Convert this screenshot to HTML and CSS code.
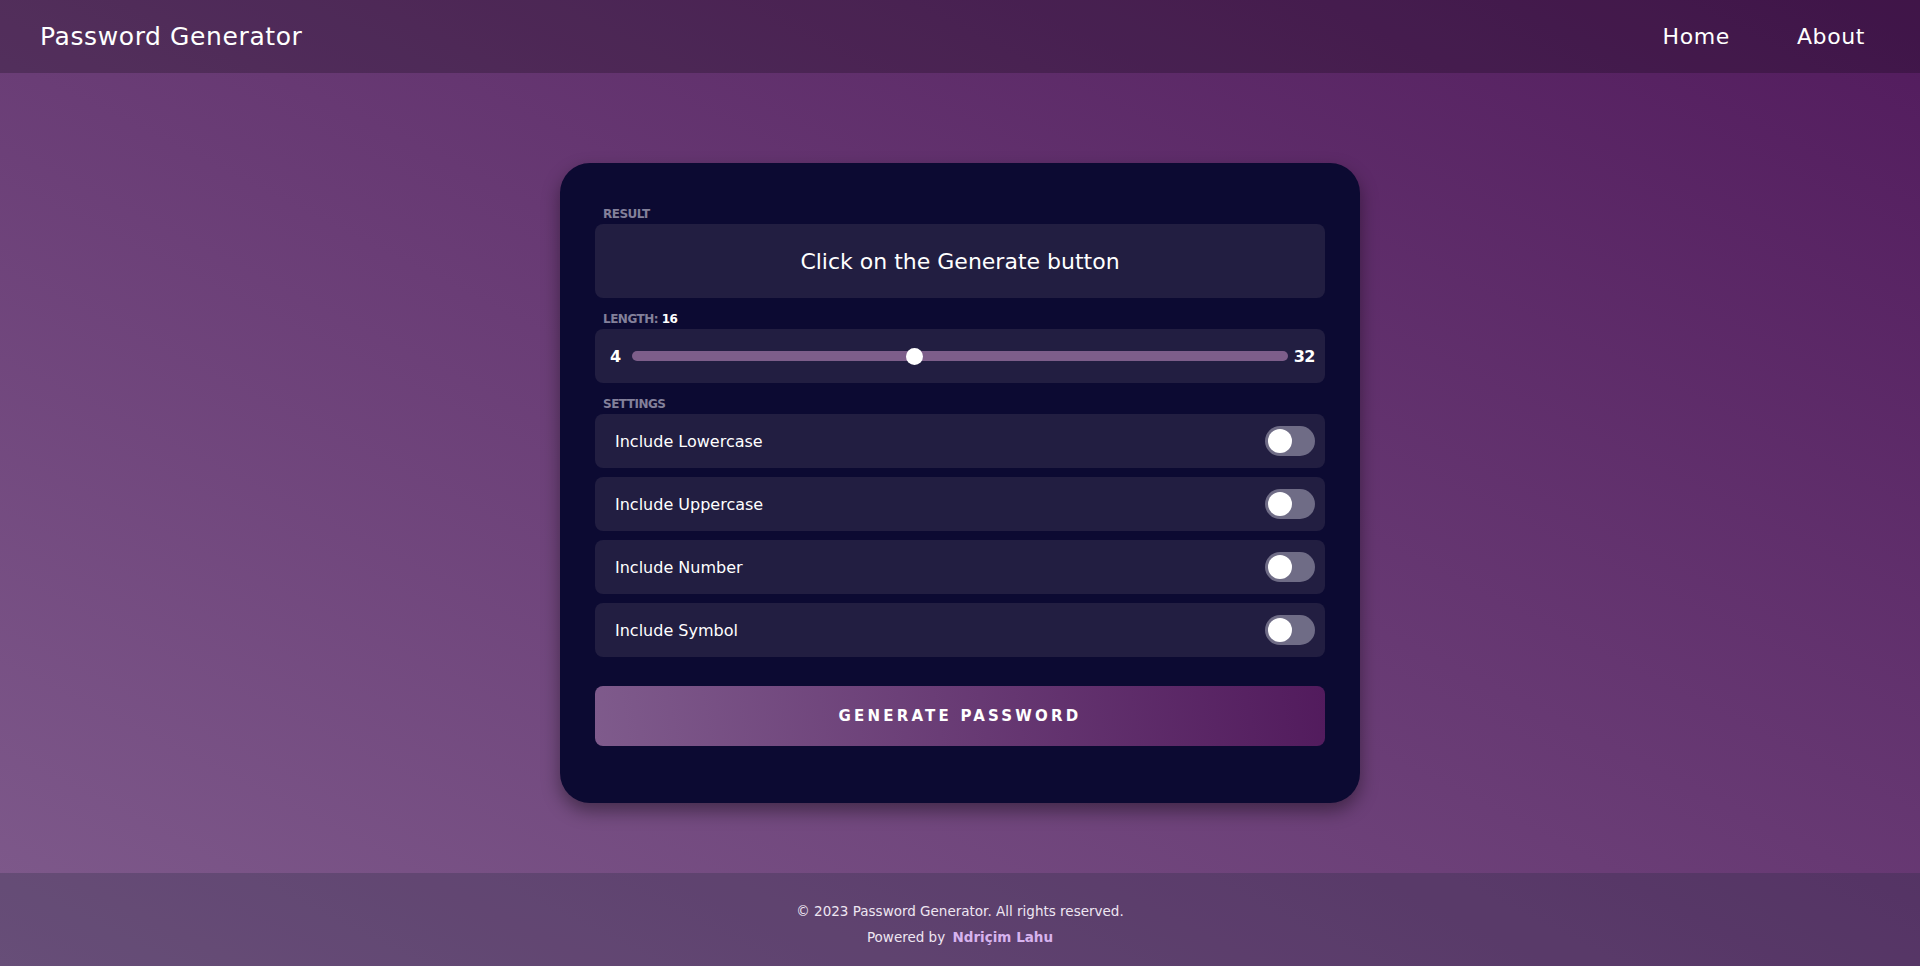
FILE: index.html
```html
<!DOCTYPE html>
<html lang="en">
<head>
<meta charset="utf-8">
<title>Password Generator</title>
<link rel="stylesheet" href="styles.css">
</head>
<body>
  <header class="topbar">
    <div class="brand">Password Generator</div>
    <nav class="nav">
      <a class="nav-link" href="#">Home</a>
      <a class="nav-link" href="#">About</a>
    </nav>
  </header>
  <main class="main">
    <section class="card">
      <div class="label label-first">RESULT</div>
      <div class="result">Click on the Generate button</div>

      <div class="label">LENGTH: <span class="label-value">16</span></div>
      <div class="slider-box">
        <span class="num num-min">4</span>
        <input class="range" type="range" min="4" max="32" value="16">
        <span class="num num-max">32</span>
      </div>

      <div class="label">SETTINGS</div>
      <div class="settings">
        <div class="setting">
          <span class="setting-text">Include Lowercase</span>
          <span class="toggle"><span class="knob"></span></span>
        </div>
        <div class="setting">
          <span class="setting-text">Include Uppercase</span>
          <span class="toggle"><span class="knob"></span></span>
        </div>
        <div class="setting">
          <span class="setting-text">Include Number</span>
          <span class="toggle"><span class="knob"></span></span>
        </div>
        <div class="setting">
          <span class="setting-text">Include Symbol</span>
          <span class="toggle"><span class="knob"></span></span>
        </div>
      </div>

      <button class="generate">GENERATE PASSWORD</button>
    </section>
  </main>
  <footer class="footer">
    <p class="footer-line">© 2023 Password Generator. All rights reserved.</p>
    <p class="footer-line">Powered by <a class="author" href="#">Ndriçim Lahu</a></p>
  </footer>
</body>
</html>
```
FILE: styles.css
```css
* { box-sizing: border-box; }

html, body {
  margin: 0;
  height: 100%;
}

body {
  font-family: "DejaVu Sans", "Liberation Sans", sans-serif;
  color: #fff;
  background: linear-gradient(to top right, #7f5b8c, #521b5d);
  display: flex;
  flex-direction: column;
  min-height: 966px;
}

.topbar {
  height: 73px;
  flex: 0 0 73px;
  display: flex;
  align-items: center;
  justify-content: space-between;
  padding: 0 55px 0 40px;
  background: rgba(0, 0, 0, 0.22);
}

.brand {
  font-size: 25px;
  letter-spacing: 0.6px;
}

.nav {
  display: flex;
  gap: 67px;
}

.nav-link {
  color: #fff;
  text-decoration: none;
  font-size: 22px;
  letter-spacing: 0.6px;
}

.main {
  flex: 1;
  display: flex;
  justify-content: center;
  align-items: flex-start;
  padding-top: 90px;
}

.card {
  width: 800px;
  height: 640px;
  background: #0c0a32;
  border-radius: 30px;
  padding: 43px 35px 57px;
  box-shadow: 0 8px 18px rgba(0, 0, 0, 0.4);
  display: flex;
  flex-direction: column;
}

.label {
  font-size: 12px;
  line-height: 16px;
  height: 16px;
  font-weight: bold;
  color: #83809a;
  letter-spacing: -0.5px;
  padding-left: 8px;
  margin-top: 13px;
  margin-bottom: 2px;
}

.label-first { margin-top: 0; }

.label-value { color: #fff; }

.result {
  height: 74px;
  background: #221e41;
  border-radius: 8px;
  display: flex;
  align-items: center;
  justify-content: center;
  font-size: 22px;
}

.slider-box {
  height: 54px;
  background: #221e41;
  border-radius: 8px;
  display: flex;
  align-items: center;
  padding: 0 10px 0 15px;
}

.num {
  font-size: 16px;
  font-weight: bold;
}

.num-min { width: 22px; }

.num-max {
  width: 27px;
  text-align: right;
  letter-spacing: -0.5px;
}

.range {
  -webkit-appearance: none;
  appearance: none;
  flex: 1;
  margin: 0;
  height: 10px;
  border-radius: 5px;
  background: #7d5e8a;
  outline: none;
}

.range::-webkit-slider-thumb {
  -webkit-appearance: none;
  appearance: none;
  width: 17px;
  height: 17px;
  border-radius: 50%;
  background: #fff;
  border: none;
}

.settings {
  display: flex;
  flex-direction: column;
  gap: 9px;
}

.setting {
  height: 54px;
  background: #221e41;
  border-radius: 8px;
  display: flex;
  align-items: center;
  justify-content: space-between;
  padding: 0 10px 0 20px;
}

.setting-text {
  font-size: 16px;
}

.toggle {
  position: relative;
  width: 50px;
  height: 30px;
  border-radius: 15px;
  background: #6f6c86;
}

.knob {
  position: absolute;
  left: 3px;
  top: 3px;
  width: 24px;
  height: 24px;
  border-radius: 50%;
  background: #fff;
}

.generate {
  margin-top: 29px;
  height: 60px;
  border: none;
  border-radius: 8px;
  background: linear-gradient(80deg, #7f5b8c, #521b5d);
  color: #fff;
  font-family: inherit;
  font-size: 15px;
  font-weight: bold;
  letter-spacing: 3.2px;
  cursor: pointer;
}

.footer {
  flex: 0 0 93px;
  height: 93px;
  padding-top: 25px;
  text-align: center;
  background: rgba(30, 40, 60, 0.25);
}

.footer-line {
  margin: 0;
  font-size: 13.5px;
  line-height: 26px;
  color: #eee6f2;
}

.author {
  color: #d7b3ee;
  font-weight: bold;
  text-decoration: none;
  margin-left: 3px;
}
```
